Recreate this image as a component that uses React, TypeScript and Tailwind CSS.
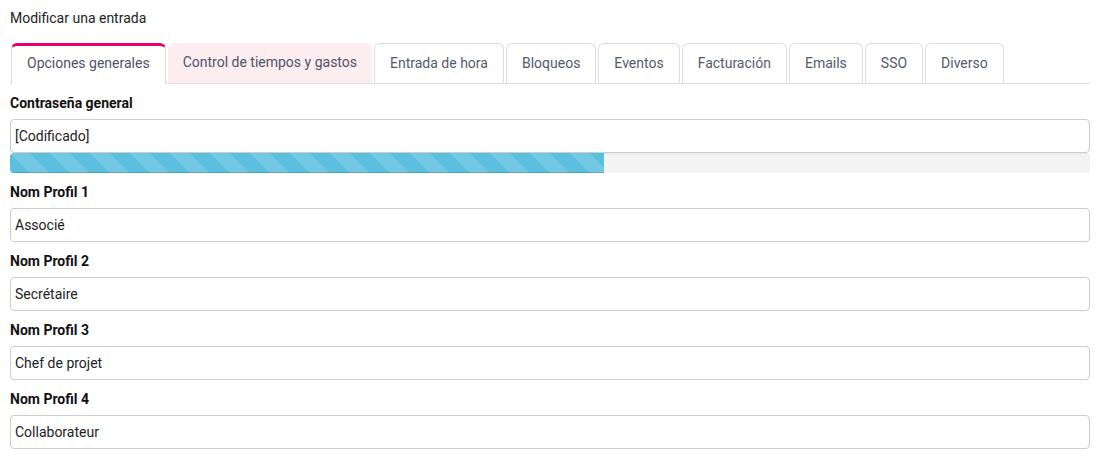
import React from "react";

const tabs = [
  "Opciones generales",
  "Control de tiempos y gastos",
  "Entrada de hora",
  "Bloqueos",
  "Eventos",
  "Facturación",
  "Emails",
  "SSO",
  "Diverso",
];

const profiles = [
  ["Nom Profil 1", "Associé"],
  ["Nom Profil 2", "Secrétaire"],
  ["Nom Profil 3", "Chef de projet"],
  ["Nom Profil 4", "Collaborateur"],
];

function Label({ children }: { children: React.ReactNode }) {
  return (
    <div className="h-[20px] leading-[20px] text-[14px] font-bold text-[#111] mb-[6px]">
      {children}
    </div>
  );
}

function Input({ value, className = "" }: { value: string; className?: string }) {
  return (
    <div
      className={
        "h-[34px] border border-[#ccc] rounded-[4px] bg-white px-[4px] flex items-center text-[14px] text-[#222] " +
        className
      }
    >
      {value}
    </div>
  );
}

export default function App() {
  return (
    <div
      className="w-[1100px] h-[469px] bg-white px-[10px] pt-[8px] text-[#333] overflow-hidden"
      style={{ fontFamily: "Roboto, 'Liberation Sans', sans-serif" }}
    >
      <div className="h-[20px] leading-[20px] text-[14px] text-[#222]">Modificar una entrada</div>
      <div className="mt-[15px] flex border-b border-[#ddd] pl-[1px]">
        {tabs.map((t, i) => {
          if (i === 0)
            return (
              <div
                key={t}
                className="mr-[2px] -mb-px h-[41px] px-[15px] pb-[4px] flex items-center bg-white border-x border-[#ddd] border-t-[3px] border-t-[#e2006a] rounded-t-[6px] text-[14px] text-[#4f5366]"
              >
                {t}
              </div>
            );
          if (i === 1)
            return (
              <div
                key={t}
                className="mr-[2px] h-[40px] px-[15px] pb-[1px] flex items-center bg-[#fcedf1] rounded-t-[6px] text-[14px] text-[#4f5366]"
              >
                {t}
              </div>
            );
          return (
            <div
              key={t}
              className="mr-[2px] h-[40px] px-[15px] pb-[1px] flex items-center border border-b-0 border-[#ddd] rounded-t-[6px] text-[14px] text-[#555a6b]"
            >
              {t}
            </div>
          );
        })}
      </div>

      <div className="mt-[9px]">
        <Label>Contraseña general</Label>
        <Input value="[Codificado]" />
        <div className="h-[20px] bg-[#f4f4f4] rounded-[4px] overflow-hidden shadow-[inset_0_1px_2px_rgba(0,0,0,0.06)]">
          <div className="h-full w-[55%] bg-[#5bc0de] bg-[linear-gradient(45deg,rgba(255,255,255,.15)_25%,transparent_25%,transparent_50%,rgba(255,255,255,.15)_50%,rgba(255,255,255,.15)_75%,transparent_75%,transparent)] bg-size-[40px_40px] shadow-[inset_0_-1px_0_rgba(0,0,0,0.15)]" />
        </div>
      </div>

      {profiles.map(([l, v]) => (
        <div key={l} className="mt-[9px]">
          <Label>{l}</Label>
          <Input value={v} />
        </div>
      ))}
    </div>
  );
}
